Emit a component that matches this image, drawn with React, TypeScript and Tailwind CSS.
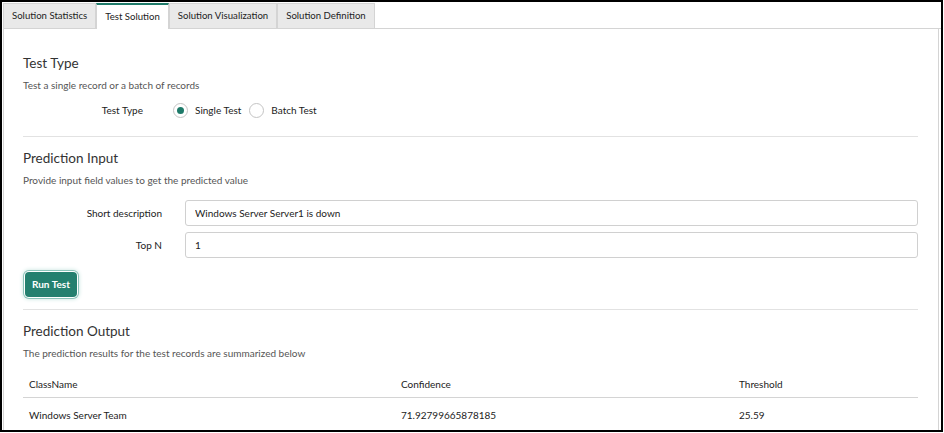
import React, { useState } from 'react';

const tabs = ['Solution Statistics', 'Test Solution', 'Solution Visualization', 'Solution Definition'];

const Radio: React.FC<{ checked: boolean; label: string; onClick: () => void }> = ({ checked, label, onClick }) => (
  <button type="button" onClick={onClick} className="flex items-center gap-[7px]">
    <span className="flex h-[15px] w-[15px] items-center justify-center rounded-full border border-[#c4c4c4] bg-white">
      {checked && <span className="h-[7px] w-[7px] rounded-full bg-[#1e7a69]" />}
    </span>
    <span className="text-[10px] text-[#222]">{label}</span>
  </button>
);

const SectionHead: React.FC<{ title: string; sub: string }> = ({ title, sub }) => (
  <div>
    <h2 className="text-[13.5px] leading-[20px] text-[#333]">{title}</h2>
    <p className="mt-[5px] text-[10px] leading-[14px] text-[#555]">{sub}</p>
  </div>
);

export default function App() {
  const [mode, setMode] = useState<'single' | 'batch'>('single');
  const [desc, setDesc] = useState('Windows Server Server1 is down');
  const [topN, setTopN] = useState('1');

  return (
    <div className="h-[433px] w-[944px] bg-white" style={{ fontFamily: 'Lato, "Liberation Sans", sans-serif' }}>
      <div className="flex h-[432px] w-[943px] flex-col border-2 border-black bg-white">
        <div className="flex h-[27px] shrink-0 pl-px pt-px">
          {tabs.map((t) => {
            const active = t === 'Test Solution';
            return (
              <div
                key={t}
                className={
                  active
                    ? 'flex items-center border-x border-t-2 border-[#d4d4d4] border-t-[#1e7a69] bg-white px-[8px] text-[9.6px] text-[#222]'
                    : 'flex items-center border border-[#d4d4d4] bg-[#e9e9e9] px-[8px] text-[9.6px] text-[#222]'
                }
              >
                {t}
              </div>
            );
          })}
          <div className="flex-1 border-b border-[#d4d4d4]" />
        </div>
        <div className="mx-px mr-[2px] flex-1 overflow-hidden border-x border-[#d4d4d4] pl-[19px] pr-[20px] pt-[24px]">
          <SectionHead title="Test Type" sub="Test a single record or a batch of records" />
          <div className="mt-[11px] flex items-center">
            <div className="w-[120px] text-right text-[10px] text-[#222]">Test Type</div>
            <div className="ml-[30px] flex items-center gap-[8px]">
              <Radio checked={mode === 'single'} label="Single Test" onClick={() => setMode('single')} />
              <Radio checked={mode === 'batch'} label="Batch Test" onClick={() => setMode('batch')} />
            </div>
          </div>
          <div className="mt-[18px] border-t border-[#e2e2e2]" />

          <div className="pt-[11px]">
            <SectionHead title="Prediction Input" sub="Provide input field values to get the predicted value" />
          </div>
          <div className="mt-[13px] flex flex-col gap-[6px]">
            <div className="flex items-center">
              <label className="w-[139px] text-right text-[10px] text-[#222]">Short description</label>
              <input
                value={desc}
                onChange={(e) => setDesc(e.target.value)}
                className="ml-[23px] h-[26px] flex-1 rounded-[3px] border border-[#d0d0d0] px-[9px] text-[10px] text-[#222] outline-none"
              />
            </div>
            <div className="flex items-center">
              <label className="w-[139px] text-right text-[10px] text-[#222]">Top N</label>
              <input
                value={topN}
                onChange={(e) => setTopN(e.target.value)}
                className="ml-[23px] h-[26px] flex-1 rounded-[3px] border border-[#d0d0d0] px-[9px] text-[10px] text-[#222] outline-none"
              />
            </div>
          </div>
          <button
            type="button"
            className="ml-[2px] mt-[14px] h-[25px] rounded-[4px] bg-[#24806f] px-[7px] text-[10px] font-bold text-white shadow-[0_0_0_1px_#ffffff,0_0_0_2px_#8cc4ba,0_0_4px_2px_#c4e3dd]"
          >
            Run Test
          </button>
          <div className="mt-[12px] border-t border-[#e2e2e2]" />

          <div className="pt-[11px]">
            <SectionHead title="Prediction Output" sub="The prediction results for the test records are summarized below" />
          </div>
          <div className="mt-[11px] text-[10px] text-[#222]">
            <div className="grid h-[27px] grid-cols-[372px_338px_1fr] items-center border-b border-[#d4d4d4]">
              <div className="pl-[6px]">ClassName</div>
              <div className="pl-[6px]">Confidence</div>
              <div className="pl-[6px]">Threshold</div>
            </div>
            <div className="grid h-[34px] grid-cols-[372px_338px_1fr] items-center">
              <div className="pl-[6px]">Windows Server Team</div>
              <div className="pl-[6px]">71.92799665878185</div>
              <div className="pl-[6px]">25.59</div>
            </div>
          </div>
        </div>
      </div>
    </div>
  );
}
